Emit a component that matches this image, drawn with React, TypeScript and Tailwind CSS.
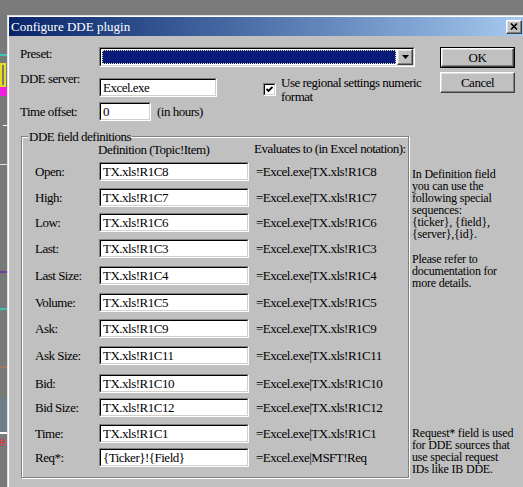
import type { ReactNode } from "react";

type FieldRow = {
  label:  string;
  def:    string;
  evalTo: string;
  gap:    string;
};

const rows: FieldRow[] = [
  { label: "Open:",      def: "TX.xls!R1C8",      evalTo: "=Excel.exe|TX.xls!R1C8",  gap: "mt-[5px]" },
  { label: "High:",      def: "TX.xls!R1C7",      evalTo: "=Excel.exe|TX.xls!R1C7",  gap: "mt-[7px]" },
  { label: "Low:",       def: "TX.xls!R1C6",      evalTo: "=Excel.exe|TX.xls!R1C6",  gap: "mt-[6px]" },
  { label: "Last:",      def: "TX.xls!R1C3",      evalTo: "=Excel.exe|TX.xls!R1C3",  gap: "mt-[7px]" },
  { label: "Last Size:", def: "TX.xls!R1C4",      evalTo: "=Excel.exe|TX.xls!R1C4",  gap: "mt-[8px]" },
  { label: "Volume:",    def: "TX.xls!R1C5",      evalTo: "=Excel.exe|TX.xls!R1C5",  gap: "mt-[8px]" },
  { label: "Ask:",       def: "TX.xls!R1C9",      evalTo: "=Excel.exe|TX.xls!R1C9",  gap: "mt-[7px]" },
  { label: "Ask Size:",  def: "TX.xls!R1C11",     evalTo: "=Excel.exe|TX.xls!R1C11", gap: "mt-[8px]" },
  { label: "Bid:",       def: "TX.xls!R1C10",     evalTo: "=Excel.exe|TX.xls!R1C10", gap: "mt-[9px]" },
  { label: "Bid Size:",  def: "TX.xls!R1C12",     evalTo: "=Excel.exe|TX.xls!R1C12", gap: "mt-[5px]" },
  { label: "Time:",      def: "TX.xls!R1C1",      evalTo: "=Excel.exe|TX.xls!R1C1",  gap: "mt-[7px]" },
  { label: "Req*:",      def: "{Ticker}!{Field}", evalTo: "=Excel.exe|MSFT!Req",     gap: "mt-[5px]" },
];

const helpTop = [
  "In Definition field",
  "you can use the",
  "following special",
  "sequences:",
  "{ticker}, {field},",
  "{server},{id}.",
  "",
  "Please refer to",
  "documentation for",
  "more details.",
];

const helpBottom = [
  "Request* field is used",
  "for DDE sources that",
  "use special request",
  "IDs like IB DDE.",
];

// classic sunken edit box
function TextBox({ value, className }: { value: string; className: string }) {
  return (
    <div className={`border border-t-[#808080] border-l-[#808080] border-b-white border-r-white ${className}`}>
      <div className="flex h-full items-center border border-t-black border-l-black border-b-[#d4d0c8] border-r-[#d4d0c8] bg-white pl-[2px] whitespace-nowrap">
        {value}
      </div>
    </div>
  );
}

function Raised({ className, children }: { className: string; children?: ReactNode }) {
  return (
    <div
      className={`flex items-center justify-center border border-t-white border-l-white border-b-[#404040] border-r-[#404040] bg-[#c0c0c0] shadow-[inset_-1px_-1px_0_#808080,inset_1px_1px_0_#dfdfdf] ${className}`}
    >
      {children}
    </div>
  );
}

export default function App() {
  return (
    <div className="relative h-[487px] w-[523px] overflow-hidden bg-[#7b7b7b] font-['Liberation_Serif',serif] text-[13px] leading-[15px] tracking-[-0.5px] text-black">
      {/* bits of the chart behind the dialog */}
      <div className="absolute left-0 top-[15px] h-[472px] w-[7px] bg-[#777a78]" />
      <div className="absolute left-0 top-[54px] h-[2px] w-[7px] bg-[#3ec6b0]" />
      <div className="absolute left-0 top-[63px] h-[24px] w-[6px] border-2 border-[#e8dc20]" />
      <div className="absolute left-0 top-[87px] h-[9px] w-[7px] bg-[#f020e0]" />
      <div className="absolute left-[3px] top-[125px] h-[1px] w-[4px] bg-white" />
      <div className="absolute left-0 top-[164px] h-[1px] w-[7px] bg-[#e0e0e0]" />
      <div className="absolute left-0 top-[271px] h-[2px] w-[7px] bg-[#7040a0]" />
      <div className="absolute left-0 top-[308px] h-[2px] w-[7px] bg-[#40c0b0]" />
      <div className="absolute left-0 top-[366px] h-[2px] w-[7px] bg-[#a07a60]" />
      <div className="absolute left-0 top-[398px] h-[34px] w-[7px] bg-[#6f7d88]" />
      <div className="absolute left-0 top-[432px] h-[2px] w-[7px] bg-white" />
      <div className="absolute -left-[1px] top-[436px] font-['Liberation_Sans',sans-serif] text-[12px] leading-[13px] text-[#e03040]">
        e
      </div>

      {/* dialog window */}
      <div className="absolute left-[7px] top-[15px] h-[480px] w-[518px] border-l border-t border-l-[#dfdfdf] border-t-[#dfdfdf] bg-[#c0c0c0]">
        <div className="h-full border-l border-t border-l-white border-t-white">
          <div className="flex h-[19px] items-center justify-between bg-gradient-to-r from-[#0a246a] to-[#a6caf0] pl-[2px] pr-[3px] text-white">
            <span className="tracking-normal">Configure DDE plugin</span>
            <Raised className="h-[14px] w-[16px]">
              <svg width="8" height="7" viewBox="0 0 8 7">
                <path d="M1 0.5 L7 6.5 M7 0.5 L1 6.5" stroke="black" strokeWidth="1.6" fill="none" />
              </svg>
            </Raised>
          </div>

          <div className="flex pl-[11px] pt-[11px]">
            <div className="flex w-[410px] flex-col">
              <div className="flex h-[20px] items-start">
                <span className="-mt-[1px] w-[79px]">Preset:</span>
                <div className="flex h-[20px] w-[316px] border border-t-[#808080] border-l-[#808080] border-b-white border-r-white">
                  <div className="flex flex-1 border border-t-black border-l-black border-b-[#d4d0c8] border-r-[#d4d0c8] bg-white">
                    <div className="m-[1px] flex-1 border border-dotted border-[#e8e8b0] bg-[#0a1a7a]" />
                    <Raised className="h-[16px] w-[16px]">
                      <svg width="7" height="4" viewBox="0 0 7 4">
                        <polygon points="0,0 7,0 3.5,4" fill="black" />
                      </svg>
                    </Raised>
                  </div>
                </div>
              </div>

              <div className="mt-[11px] flex h-[19px] items-start">
                <span className="-mt-[7px] w-[79px]">DDE server:</span>
                <TextBox value="Excel.exe" className="h-[19px] w-[118px]" />
                <div className="ml-[46px] mt-[5px] h-[13px] w-[13px] border border-t-[#808080] border-l-[#808080] border-b-white border-r-white">
                  <div className="flex h-full items-center justify-center border border-t-black border-l-black border-b-[#d4d0c8] border-r-[#d4d0c8] bg-white">
                    <svg width="7" height="7" viewBox="0 0 7 7">
                      <path d="M0.5 3 L2.5 5 L6.5 1" stroke="black" strokeWidth="1.8" fill="none" />
                    </svg>
                  </div>
                </div>
                <div className="-mt-[2px] ml-[5px] leading-[14px]">
                  <div>Use regional settings numeric</div>
                  <div>format</div>
                </div>
              </div>

              <div className="mt-[5px] flex h-[19px] items-center">
                <span className="w-[79px]">Time offset:</span>
                <TextBox value="0" className="h-[19px] w-[52px]" />
                <span className="ml-[6px]">(in hours)</span>
              </div>
            </div>

            <div className="ml-[10px] flex flex-col gap-[4px]">
              <div className="h-[21px] w-[75px] border border-black">
                <Raised className="h-full w-full">OK</Raised>
              </div>
              <Raised className="h-[21px] w-[75px]">Cancel</Raised>
            </div>
          </div>

          <div className="mt-[15px] flex pl-[12px]">
            <div className="relative h-[342px] w-[388px] border border-[#808080] shadow-[inset_1px_1px_0_#fff,1px_1px_0_#fff]">
              <span className="absolute -top-[8px] left-[6px] bg-[#c0c0c0] px-[1px]">DDE field definitions</span>
              <div className="flex flex-col pl-[13px] pt-[4px]">
                <div className="flex items-start">
                  <span className="ml-[63px] mt-[1px] w-[156px]">Definition (Topic!Item)</span>
                  <span>Evaluates to (in Excel notation):</span>
                </div>
                {rows.map((r) => (
                  <div key={r.label} className={`flex h-[19px] items-center ${r.gap}`}>
                    <span className="w-[64px]">{r.label}</span>
                    <TextBox value={r.def} className="h-[19px] w-[150px]" />
                    <span className="ml-[7px] whitespace-nowrap">{r.evalTo}</span>
                  </div>
                ))}
              </div>
            </div>

            <div className="ml-[3px] flex h-[342px] flex-col justify-between pb-[3px] pt-[32px] text-[12px] leading-[12.1px] tracking-[-0.2px] whitespace-nowrap">
              <div>
                {helpTop.map((line, i) => (
                  <div key={i} className="h-[12.1px]">{line}</div>
                ))}
              </div>
              <div>
                {helpBottom.map((line) => (
                  <div key={line}>{line}</div>
                ))}
              </div>
            </div>
          </div>
        </div>
      </div>
    </div>
  );
}
